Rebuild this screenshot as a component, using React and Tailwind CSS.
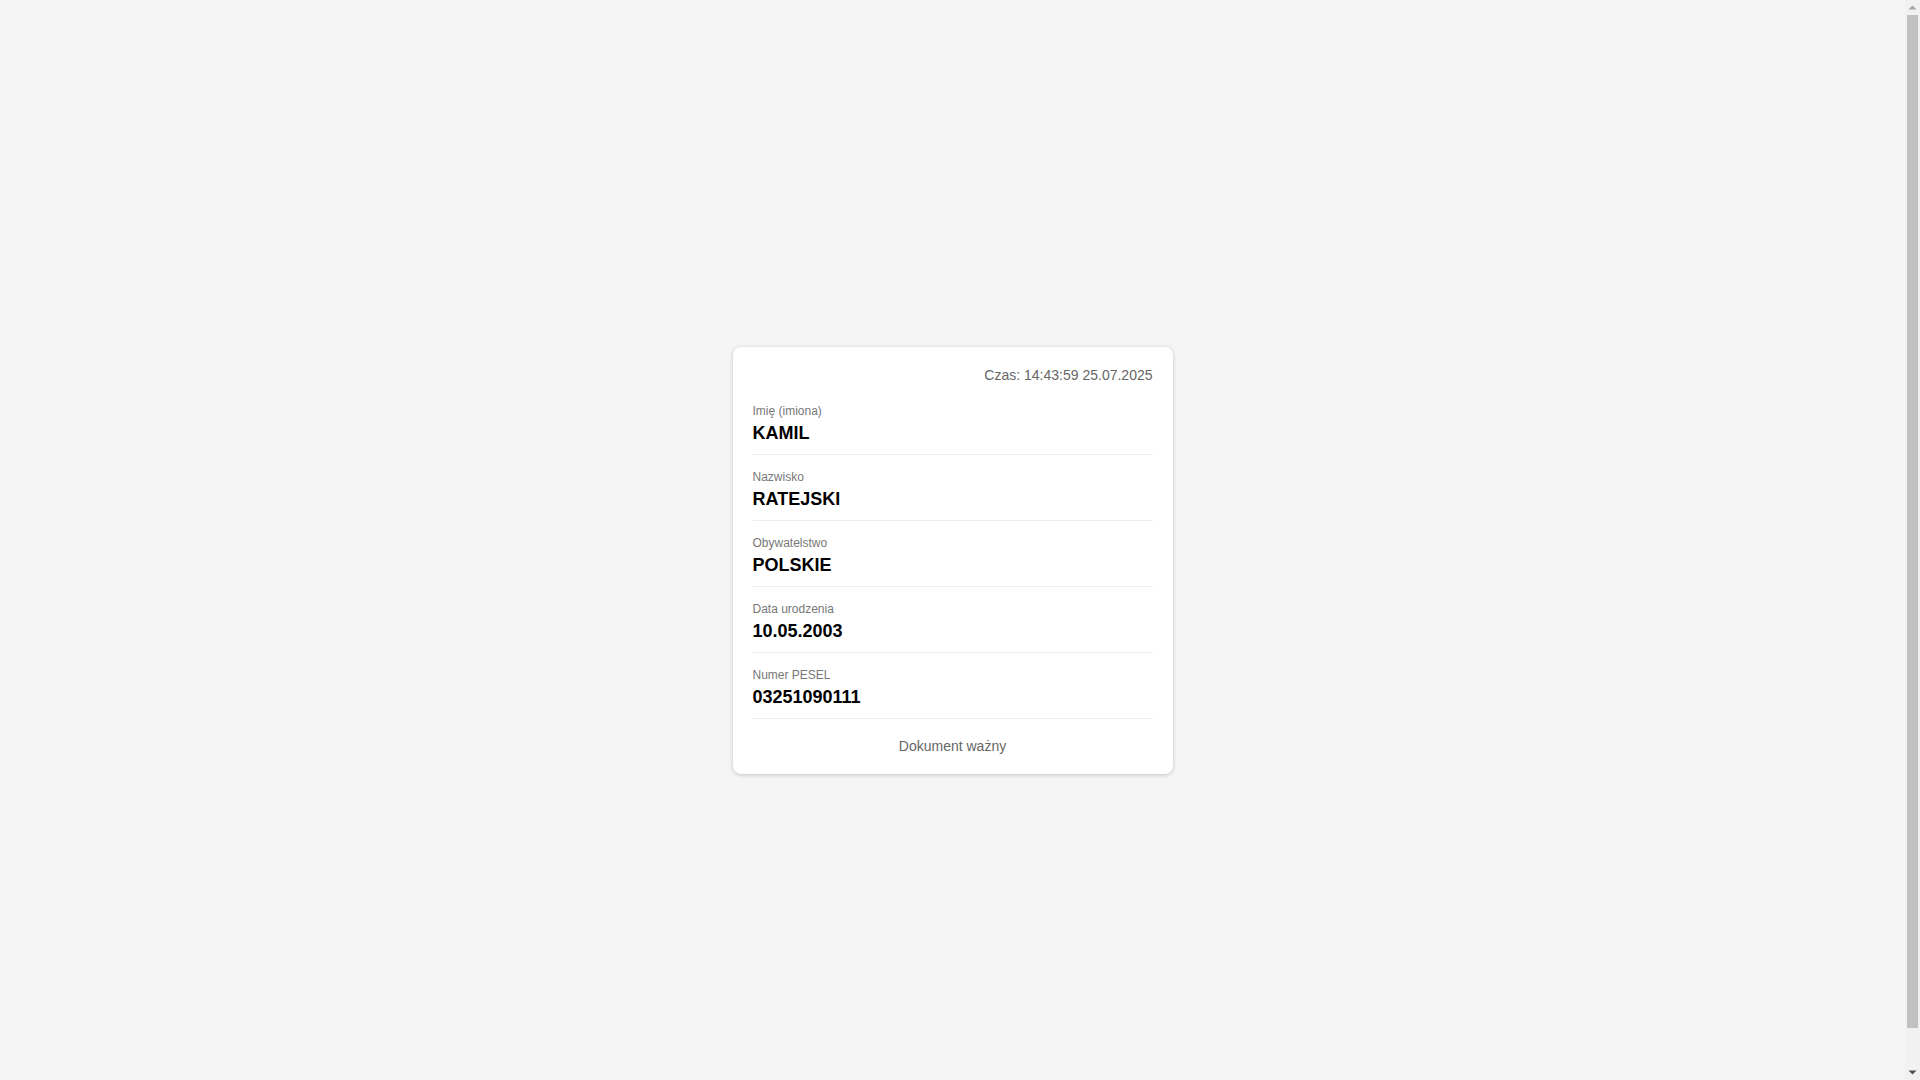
export default function App() {
  const rows = [
    ["Imię (imiona)", "KAMIL"],
    ["Nazwisko", "RATEJSKI"],
    ["Obywatelstwo", "POLSKIE"],
    ["Data urodzenia", "10.05.2003"],
    ["Numer PESEL", "03251090111"],
  ];
  return (
    <div
      className="bg-[#f5f5f5] p-5 pr-[35px] leading-[normal]"
      style={{ fontFamily: '"Liberation Sans", Arial, sans-serif' }}
    >
      <div className="min-h-screen flex items-center justify-center">
        <div className="w-[440px] bg-white rounded-lg p-5 shadow-[0_1px_4px_rgba(0,0,0,0.2)]">
          <div className="text-right text-[14px] leading-[16px] text-[#666] mb-[21px]">
            Czas: 14:43:59 25.07.2025
          </div>
          {rows.map(([label, value]) => (
            <div key={label} className="pb-[10px] mb-[15px] border-b border-[#eee]">
              <div className="text-[12px] leading-[14px] text-[#777] mb-[5px]">{label}</div>
              <div className="text-[18px] leading-[21px] font-bold text-black">{value}</div>
            </div>
          ))}
          <div className="text-center text-[14px] leading-[16px] text-[#666] mt-[19px]">
            Dokument ważny
          </div>
        </div>
      </div>
      <div className="fixed top-0 right-0 w-[15px] h-screen bg-[#f1f1f1] flex flex-col items-center">
        <svg width="15" height="15" viewBox="0 0 15 15" className="shrink-0">
          <path d="M3.5 9.5 L7.5 5.5 L11.5 9.5 Z" fill="#a3a3a3" />
        </svg>
        <div className="w-[11px] h-[1013px] bg-[#c1c1c1] shrink-0" />
        <div className="flex-1" />
        <svg width="15" height="15" viewBox="0 0 15 15" className="shrink-0">
          <path d="M3.5 5.5 L7.5 9.5 L11.5 5.5 Z" fill="#505050" />
        </svg>
      </div>
    </div>
  );
}
